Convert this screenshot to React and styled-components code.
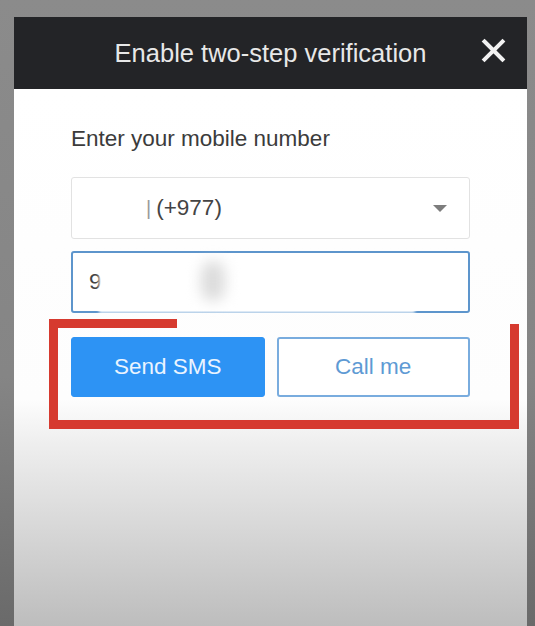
import React from 'react';
import styled, { createGlobalStyle } from 'styled-components';

const GlobalStyle = createGlobalStyle`
  html, body {
    margin: 0;
    padding: 0;
  }
  body {
    font-family: "Liberation Sans", Arial, sans-serif;
  }
`;

const Page = styled.div`
  position: relative;
  height: 626px;
  overflow: hidden;
  padding: 17px 8px 0 14px;
  box-sizing: border-box;
  background: linear-gradient(to bottom, #8b8b8b 0%, #858585 60%, #6a6a6a 100%);
`;

const Modal = styled.div`
  display: flex;
  flex-direction: column;
  width: 513px;
  height: 609px;
`;

const Header = styled.div`
  display: grid;
  grid-template-columns: 1fr auto 1fr;
  align-items: center;
  height: 72px;
  padding: 0 21px 0 0;
  background: #232427;
`;

const Title = styled.h1`
  grid-column: 2;
  margin: 0;
  padding-left: 21px;
  font-size: 25.5px;
  font-weight: normal;
  color: #e8e8e8;
  line-height: 30px;
`;

const Close = styled.button`
  grid-column: 3;
  justify-self: end;
  display: flex;
  align-items: center;
  justify-content: center;
  width: 26px;
  height: 26px;
  margin-top: -6px;
  padding: 0;
  border: none;
  background: transparent;
  cursor: pointer;
`;

const Body = styled.div`
  flex: 1;
  display: flex;
  flex-direction: column;
  padding: 37px 57px 0;
  background: linear-gradient(
    to bottom,
    #ffffff 0px,
    #fdfdfd 310px,
    #efefef 352px,
    #bdbdbd 537px
  );
`;

const Label = styled.div`
  font-size: 22.5px;
  line-height: 26px;
  color: #3b3b3b;
  margin-bottom: 25px;
`;

const Field = styled.div`
  position: relative;
  display: flex;
  align-items: center;
  height: 62px;
  box-sizing: border-box;
  padding: 0 ${p => (p.$select ? '22px' : '16px')} 0 16px;
  margin-bottom: ${p => p.$gap}px;
  border: ${p => (p.$focused ? '2px solid #5d95cc' : '1px solid #e2e2e2')};
  border-radius: 3px;
  background: #fff;
  font-size: 22.5px;
  color: #444;
`;

const FieldText = styled.span`
  flex: 1;
  padding-left: ${p => p.$indent || 0}px;
`;

const Remnant = styled.span`
  color: #9a9a9a;
  font-size: 20px;
  margin-right: 5px;
`;

const Caret = styled.span`
  width: 0;
  height: 0;
  border-left: 7px solid transparent;
  border-right: 7px solid transparent;
  border-top: 7px solid #7d7d7d;
`;

const Smudge = styled.div`
  position: absolute;
  top: 3px;
  bottom: -2px;
  left: 26px;
  width: 316px;
  background: rgba(255, 255, 255, 0.93);
  filter: blur(1.5px);
`;

const Blob = styled.div`
  position: absolute;
  top: 8px;
  left: 128px;
  width: 24px;
  height: 40px;
  border-radius: 12px;
  background: #dcdcdc;
  filter: blur(7px);
`;

const Buttons = styled.div`
  display: grid;
  grid-template-columns: 1fr 1fr;
  gap: 12px;
`;

const Button = styled.button`
  height: 60px;
  border-radius: 3px;
  font-family: "Liberation Sans", Arial, sans-serif;
  font-size: 22.5px;
  cursor: pointer;
  border: ${p => (p.$primary ? '1px solid #2d93f4' : '2px solid #79acde')};
  background: ${p => (p.$primary ? '#2d93f4' : '#ffffff')};
  color: ${p => (p.$primary ? '#eaf4ff' : '#5e9ad4')};
`;

const Annotation = styled.svg`
  position: absolute;
  left: 0;
  top: 0;
  pointer-events: none;
`;

export default function App() {
  return (
    <Page>
      <GlobalStyle />
      <Modal>
        <Header>
          <Title>Enable two-step verification</Title>
          <Close aria-label="Close">
            <svg width="25" height="25" viewBox="0 0 25 25">
              <path d="M3.5 3.5 L21.5 21.5 M21.5 3.5 L3.5 21.5" stroke="#f2f2f2" strokeWidth="4" strokeLinecap="square" />
            </svg>
          </Close>
        </Header>
        <Body>
          <Label>Enter your mobile number</Label>
          <Field $select $gap={12}>
            <FieldText $indent={58}>
              <Remnant>|</Remnant>(+977)
            </FieldText>
            <Caret />
          </Field>
          <Field $focused $gap={24}>
            <FieldText>9</FieldText>
            <Smudge />
            <Blob />
          </Field>
          <Buttons>
            <Button $primary>Send SMS</Button>
            <Button>Call me</Button>
          </Buttons>
        </Body>
      </Modal>
      <Annotation width="535" height="626">
        <rect x="49" y="319" width="128" height="9" fill="#d63a2f" />
        <rect x="49" y="319" width="9" height="110" fill="#d63a2f" />
        <rect x="49" y="420" width="470" height="9" fill="#d63a2f" />
        <rect x="510" y="324" width="9" height="105" fill="#d63a2f" />
      </Annotation>
    </Page>
  );
}
